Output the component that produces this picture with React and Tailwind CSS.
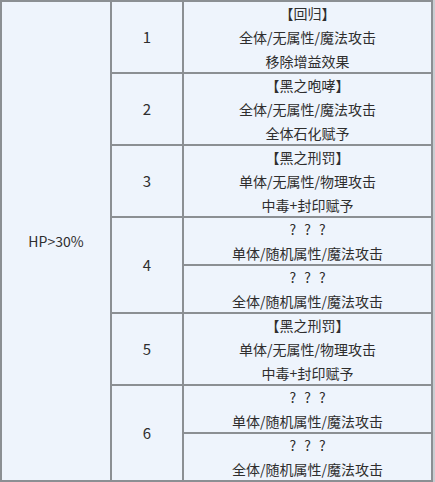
const ROWS = [
  { n: 1, pos: 'row-start-1 row-span-1' },
  { n: 2, pos: 'row-start-2 row-span-1' },
  { n: 3, pos: 'row-start-3 row-span-1' },
  { n: 4, pos: 'row-start-4 row-span-2' },
  { n: 5, pos: 'row-start-6 row-span-1' },
  { n: 6, pos: 'row-start-7 row-span-2' },
]

const CELLS = [
  { pos: 'row-start-1', lines: ['【回归】', '全体/无属性/魔法攻击', '移除增益效果'] },
  { pos: 'row-start-2', lines: ['【黑之咆哮】', '全体/无属性/魔法攻击', '全体石化赋予'] },
  { pos: 'row-start-3', lines: ['【黑之刑罚】', '单体/无属性/物理攻击', '中毒+封印赋予'] },
  { pos: 'row-start-4', lines: ['? ? ?', '单体/随机属性/魔法攻击'] },
  { pos: 'row-start-5', lines: ['? ? ?', '全体/随机属性/魔法攻击'] },
  { pos: 'row-start-6', lines: ['【黑之刑罚】', '单体/无属性/物理攻击', '中毒+封印赋予'] },
  { pos: 'row-start-7', lines: ['? ? ?', '单体/随机属性/魔法攻击'] },
  { pos: 'row-start-8', lines: ['? ? ?', '全体/随机属性/魔法攻击'] },
]

export default function App() {
  return (
    <div className="w-[435px] h-[482px] bg-[#c9cdd1]">
      <div
        className="w-[433px] h-[482px] bg-[#8b8f93] grid grid-cols-[108px_70px_247px] grid-rows-[70px_70px_70px_46px_46px_70px_46px_46px] gap-[2px] p-[2px] text-[14px] text-[#2e2e2e]"
        style={{ fontFamily: '"Noto Sans CJK SC", "Noto Sans", sans-serif' }}
      >
        <div className="col-start-1 row-start-1 row-span-8 bg-[#eef4fc] flex items-center justify-center">
          HP&gt;30%
        </div>
        {ROWS.map(r => (
          <div key={r.n} className={`col-start-2 ${r.pos} bg-[#eef4fc] flex items-center justify-center text-[15px]`}>
            {r.n}
          </div>
        ))}
        {CELLS.map((c, i) => (
          <div key={i} className={`col-start-3 ${c.pos} bg-[#eef4fc] flex flex-col items-center justify-center overflow-hidden leading-6`}>
            {c.lines.map((l, j) => (
              <span key={j} className={l.startsWith('?') ? 'whitespace-nowrap tracking-[2.5px] pl-[2.5px]' : 'whitespace-nowrap'}>
                {l}
              </span>
            ))}
          </div>
        ))}
      </div>
    </div>
  )
}
